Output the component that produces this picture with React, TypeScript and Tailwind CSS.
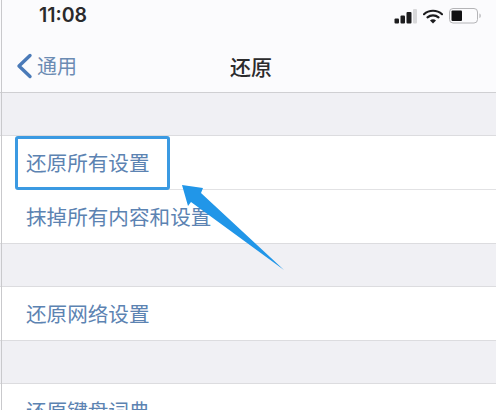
const cjk = "font-['Noto_Sans_CJK_SC','Noto_Sans',sans-serif]";

const Row = ({ label }: { label: string }) => (
  <div className="h-[53px] flex items-center pl-[26px] pb-[1px]">
    <span className={`${cjk} text-[20.6px] leading-none text-[#5c83b2]`}>{label}</span>
  </div>
);

const StatusIcons = () => (
  <div className="flex items-center gap-[6px]">
    <svg width="23" height="15" viewBox="0 0 23 15">
      <rect x="0.500" y="9.500" width="4.500" height="5" rx="1" fill="#1c1c1e" />
      <rect x="6.500" y="6.500" width="4.500" height="8" rx="1" fill="#1c1c1e" />
      <rect x="12.500" y="3" width="5" height="11.500" rx="1" fill="#1c1c1e" />
      <rect x="19" y="0" width="4" height="14.500" rx="1" fill="#d8d8da" />
    </svg>
    <svg width="20" height="15" viewBox="0 0 20 15">
      <path d="M1 5.200C6 .6 14 .6 19 5.200" fill="none" stroke="#1c1c1e" strokeWidth="2.200" strokeLinecap="round" />
      <path d="M4.500 8.400C7.600 5.700 12.400 5.700 15.500 8.400" fill="none" stroke="#1c1c1e" strokeWidth="2.200" strokeLinecap="round" />
      <path d="M10 14.600L7 11.400C8.700 10 11.300 10 13 11.400Z" fill="#1c1c1e" />
    </svg>
    <svg width="33" height="16" viewBox="0 0 33 16">
      <rect x="0.500" y="0.500" width="28" height="14.500" rx="3.500" fill="none" stroke="#b4b4b7" />
      <rect x="2.500" y="2.500" width="10.500" height="10.500" rx="1" fill="#111113" />
      <path d="M30.500 5.500C32 6 32 9.500 30.500 10Z" fill="#a9a9ac" />
    </svg>
  </div>
);

export default function App() {
  return (
    <div className={`${cjk} relative w-[496px] h-[410px] overflow-hidden bg-[#f0f0f4]`}>
      <div className="h-[93px] bg-[#fbfbfd] border-b border-[#cfcfd2] flex flex-col">
        <div className="h-[32px] flex items-center justify-between pl-[39px] pr-[14px]">
          <span className="font-['Inter',sans-serif] text-[19.5px] font-semibold text-[#2a2a2c] leading-none">11:08</span>
          <StatusIcons />
        </div>
        <div className="flex-1 relative flex items-center justify-center pt-[8px] pl-[6px]">
          <span className="text-[21px] leading-none font-medium text-[#2b2b2d]">还原</span>
          <div className="absolute left-[16px] top-[21px] flex items-center gap-[4px]">
            <svg width="17" height="26" viewBox="0 0 17 26">
              <path d="M14 2.500L3 13L14 23.500" fill="none" stroke="#4a7ab8" strokeWidth="3.400" strokeLinecap="round" strokeLinejoin="round" />
            </svg>
            <span className="text-[20px] leading-none text-[#6b8bb3]">通用</span>
          </div>
        </div>
      </div>

      <div className="h-[42px]" />

      <div className="bg-white border-y border-[#dcdcdf]">
        <Row label="还原所有设置" />
        <div className="h-px ml-[26px] bg-[#e2e2e4]" />
        <Row label="抹掉所有内容和设置" />
      </div>

      <div className="h-[42px]" />

      <div className="bg-white border-y border-[#dcdcdf]">
        <Row label="还原网络设置" />
      </div>

      <div className="h-[42px]" />

      <div className="bg-white border-t border-[#dcdcdf]">
        <Row label="还原键盘词典" />
      </div>

      <div className="absolute inset-y-0 left-[1px] w-px bg-[#c9c9cc]" />

      {/* highlight box */}
      <div className="absolute left-[15px] top-[136px] w-[155px] h-[54px] rounded-[3px] border-[3px] border-[#3b9ae2]" />

      {/* arrow */}
      <svg className="absolute left-[175px] top-[178px]" width="120" height="100" viewBox="0 0 120 100">
        <path d="M7 7L28 10L26 15L109 92L16 24L13 28Z" fill="#2196e8" />
      </svg>
    </div>
  );
}
